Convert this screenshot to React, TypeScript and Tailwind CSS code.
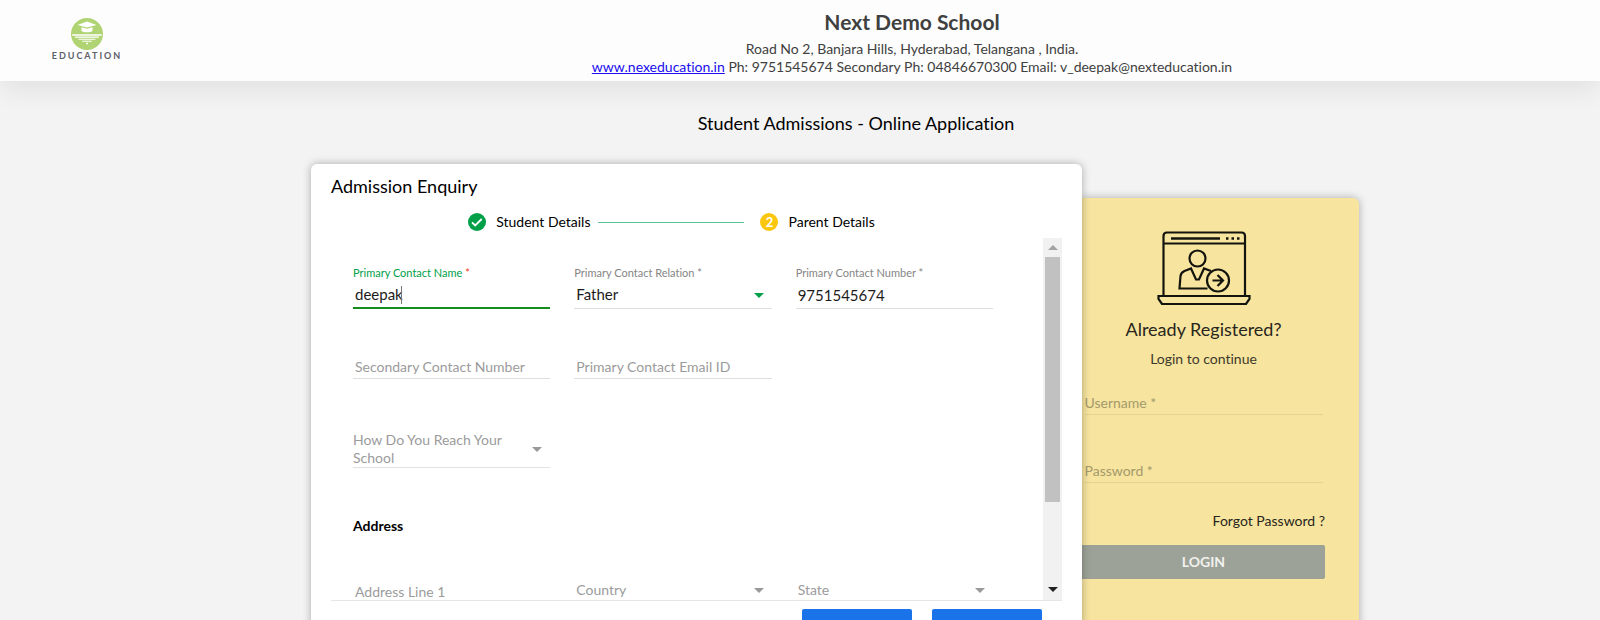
import * as React from "react"
import clsx from "clsx"

interface FieldProps {
  id: string
  label: string
  required?: boolean
}

interface TextFieldProps extends FieldProps {
  value?: string
  focused?: boolean
}

interface SelectFieldProps extends FieldProps {
  value?: string
}

const Caret = ({ className }: { className?: string }) => (
  <svg viewBox="0 0 10 5" className={clsx("h-[5px] w-[10px]", className)} fill="currentColor" aria-hidden="true">
    <path d="M0 0h10L5 5z" />
  </svg>
)

const FloatingLabel = ({ id, label, required, focused }: FieldProps & { focused?: boolean }) => (
  <label htmlFor={id} className={clsx("block text-[11px] leading-4", focused ? "text-[#00a049]" : "text-[#858585]")}>
    {label}
    {required && <span className={focused ? "text-[#f04020]" : ""}> *</span>}
  </label>
)

function TextField({ id, label, required, value, focused }: TextFieldProps) {
  return (
    <div className="flex h-11 flex-col justify-end">
      {value && <FloatingLabel id={id} label={label} required={required} focused={focused} />}
      <div className="grid items-center">
        <input
          id={id}
          type="text"
          defaultValue={value}
          placeholder={value ? undefined : label}
          aria-label={value ? undefined : label}
          className={clsx(
            "col-start-1 row-start-1 w-full bg-transparent px-0.5 text-[#1c1c1c] outline-none placeholder:text-[#9b9b9b]",
            value ? "h-7 text-[15px]" : "h-6 text-sm",
            focused ? "border-b-2 border-[#138d1c]" : "border-b border-[#dedede]"
          )}
        />
        {focused && <span className="col-start-1 row-start-1 ml-12 h-[18px] w-px bg-[#777]" />}
      </div>
    </div>
  )
}

function SelectField({ id, label, required, value }: SelectFieldProps) {
  return (
    <div className="flex h-11 flex-col justify-end">
      {value && <FloatingLabel id={id} label={label} required={required} />}
      <div className="grid items-center">
        <select
          id={id}
          defaultValue={value ?? ""}
          aria-label={value ? undefined : label}
          className={clsx(
            "col-start-1 row-start-1 h-7 w-full appearance-none border-b border-[#dedede] bg-transparent px-0.5 outline-none",
            value ? "text-[15px] text-[#1c1c1c]" : "text-sm text-[#9b9b9b]"
          )}
        >
          <option value={value ?? ""}>{value ?? label}</option>
        </select>
        <Caret
          className={clsx(
            "pointer-events-none col-start-1 row-start-1 mr-2 justify-self-end",
            value ? "text-[#00a049]" : "text-[#999]"
          )}
        />
      </div>
    </div>
  )
}

function Logo() {
  return (
    <div className="flex w-[174px] shrink-0 flex-col items-center">
      <svg viewBox="0 0 32 32" className="size-8" aria-hidden="true">
        <circle cx="16" cy="16" r="16" fill="#b0d473" />
        <g fill="#fff">
          <path d="M16 3.5 25.5 7 16 9.5 6.5 7z" />
          <path d="M10.5 9.3 16 10.8 21.5 9.3V13c-2 1.7-9 1.7-11 0z" />
          <rect x="1" y="16.3" width="30" height="1.5" rx=".7" />
          <rect x="4" y="18.6" width="24" height="1.1" rx=".5" />
          <rect x="7.5" y="20.7" width="17" height="1" rx=".5" />
          <rect x="11" y="22.8" width="10" height=".9" rx=".4" />
          <rect x="15" y="24.7" width="2" height="1.5" rx=".4" />
        </g>
      </svg>
      <span className="text-[9px] leading-3 font-bold tracking-[2px] text-[#5b6069]">EDUCATION</span>
    </div>
  )
}

function Header() {
  return (
    <header className="flex items-start bg-[#fdfdfd] shadow-[0_12px_24px_-2px_rgba(0,0,0,0.07)]">
      <div className="w-56 shrink-0 pt-[18px]">
        <Logo />
      </div>
      <div className="flex-1 pt-2 pb-[5px] text-center text-sm leading-[18px] text-[#404040]">
        <h1 className="mb-1 text-[21px] leading-7 font-bold">Next Demo School</h1>
        <p>Road No 2, Banjara Hills, Hyderabad, Telangana , India.</p>
        <p>
          <a href="#" className="text-[#1a0dee] underline">
            www.nexeducation.in
          </a>{" "}
          Ph: 9751545674 Secondary Ph: 04846670300 Email: v_deepak@nexteducation.in
        </p>
      </div>
    </header>
  )
}

function Stepper() {
  return (
    <ol className="flex items-center justify-center pr-[50px] text-sm leading-5 text-black">
      <li className="flex items-center gap-2.5">
        <svg viewBox="0 0 18 18" className="size-[18px]" aria-hidden="true">
          <circle cx="9" cy="9" r="9" fill="#00a049" />
          <path d="m4 9.3 3.2 3.2 6.5-6.5" fill="none" stroke="#fff" strokeWidth="1.8" />
        </svg>
        Student Details
      </li>
      <li className="mr-4 ml-2 h-px w-[146px] bg-[#5cc495]" aria-hidden="true" />
      <li className="flex items-center gap-2.5">
        <span className="size-[18px] rounded-full bg-[#fbc60f] text-center text-[13px] leading-[18px] font-bold text-white">
          2
        </span>
        Parent Details
      </li>
    </ol>
  )
}

function ScrollTrack() {
  return (
    <div className="flex w-[19px] shrink-0 flex-col items-center bg-[#f1f1f1]" aria-hidden="true">
      <div className="flex h-[19px] items-center">
        <Caret className="rotate-180 text-[#a3a3a3]" />
      </div>
      <div className="h-[245px] w-[15px] bg-[#c1c1c1]" />
      <div className="mt-auto flex h-[21px] items-center">
        <Caret className="text-[#222]" />
      </div>
    </div>
  )
}

function EnquiryForm() {
  return (
    <form className="z-10 flex-1 rounded-md bg-white px-5 pt-2 shadow-[0_0_8px_rgba(0,0,0,0.3)]">
      <h3 className="mb-3 text-lg leading-7 text-black">Admission Enquiry</h3>
      <Stepper />
      <div className="mt-1.5 flex h-[363px] overflow-hidden border-b border-[#e6e6e6]">
        <div className="flex-1 pt-[27px] pr-[50px] pl-[22px]">
          <div className="grid grid-cols-3 gap-x-6 gap-y-[26px]">
            <TextField id="contact-name" label="Primary Contact Name" value="deepak" required focused />
            <SelectField id="contact-relation" label="Primary Contact Relation" value="Father" required />
            <TextField id="contact-number" label="Primary Contact Number" value="9751545674" required />
            <TextField id="secondary-number" label="Secondary Contact Number" />
            <TextField id="contact-email" label="Primary Contact Email ID" />
          </div>
          <div className="mt-[52px] grid grid-cols-3 gap-x-6">
            <div className="grid items-center border-b border-[#e2e2e2]">
              <label htmlFor="reach" className="col-start-1 row-start-1 pr-10 text-sm leading-[18px] text-[#9b9b9b]">
                How Do You Reach Your School
              </label>
              <select id="reach" className="col-start-1 row-start-1 h-9 w-full appearance-none bg-transparent outline-none" />
              <Caret className="pointer-events-none col-start-1 row-start-1 mr-2 justify-self-end text-[#999]" />
            </div>
          </div>
          <h4 className="mt-12 text-sm leading-5 font-bold text-black">Address</h4>
          <div className="mt-6 grid grid-cols-3 gap-x-6">
            <TextField id="address-1" label="Address Line 1" />
            <SelectField id="country" label="Country" />
            <SelectField id="state" label="State" />
          </div>
        </div>
        <ScrollTrack />
      </div>
      <div className="flex justify-end gap-5 pt-2 pr-5">
        <button type="button" aria-label="Back" className="h-10 w-[110px] rounded-xs bg-[#1a73e8]" />
        <button type="submit" aria-label="Submit" className="h-10 w-[110px] rounded-xs bg-[#1a73e8]" />
      </div>
    </form>
  )
}

function LaptopIcon() {
  return (
    <svg
      viewBox="0 0 94 74"
      className="h-[74px] w-[94px] text-[#14140e]"
      fill="none"
      stroke="currentColor"
      strokeWidth="2.2"
      aria-hidden="true"
    >
      <path d="M6.5 64V5Q6.5 1.5 10 1.5H84.5Q88 1.5 88 5V64" />
      <path d="M6.5 12.5H88" />
      <path d="M14 7.5H63" strokeWidth="2.6" />
      <path d="M69 7.5h2.5M74.5 7.5H77M80 7.5h2.5" strokeWidth="2.6" />
      <circle cx="40.5" cy="27.5" r="8" />
      <path d="M50.5 57.5H22.5L23.5 45Q24 41.5 27.5 40L34 37.5 39 48.5H42L47 37.5 54 40" />
      <circle cx="61" cy="49.5" r="11" />
      <path d="M55.5 49.5H66M60.5 44 66 49.5 60.5 55" />
      <path d="M1.5 65H92.5V68L89 73H5L1.5 68Z" />
    </svg>
  )
}

function LoginCard() {
  return (
    <form className="mt-[34px] flex w-[277px] shrink-0 flex-col items-center rounded-r-md bg-[#f7e49f] pt-[33px] pr-[34px] text-[#3d3a2b] shadow-[0_0_8px_rgba(0,0,0,0.3)]">
      <LaptopIcon />
      <h3 className="mt-3 text-lg leading-6 text-[#28261c]">Already Registered?</h3>
      <p className="mt-2 text-sm leading-5">Login to continue</p>
      <input
        type="text"
        aria-label="Username"
        placeholder="Username *"
        className="mt-[22px] h-6 w-[238px] border-b border-[#e5d391] bg-transparent text-sm outline-none placeholder:text-[#a49a6b]"
      />
      <input
        type="password"
        aria-label="Password"
        placeholder="Password *"
        className="mt-11 h-6 w-[238px] border-b border-[#e5d391] bg-transparent text-sm outline-none placeholder:text-[#a49a6b]"
      />
      <a href="#" className="mt-7 self-end text-sm leading-5 text-[#28261c]">
        Forgot Password ?
      </a>
      <button type="submit" className="mt-3.5 h-[34px] w-full rounded-r-xs bg-[#9da298] text-sm font-bold text-[#f1f1ee]">
        LOGIN
      </button>
    </form>
  )
}

export default function App() {
  return (
    <div className="flex h-screen flex-col overflow-hidden bg-[#f3f3f3] font-['Lato',sans-serif] [font-variant-ligatures:none]">
      <Header />
      <main className="flex flex-1 flex-col">
        <h2 className="mt-7 pl-28 text-center text-lg leading-7 text-black">Student Admissions - Online Application</h2>
        <div className="mt-[27px] flex flex-1 justify-center pl-[70px]">
          <div className="flex w-full max-w-[1048px]">
            <EnquiryForm />
            <LoginCard />
          </div>
        </div>
      </main>
    </div>
  )
}
